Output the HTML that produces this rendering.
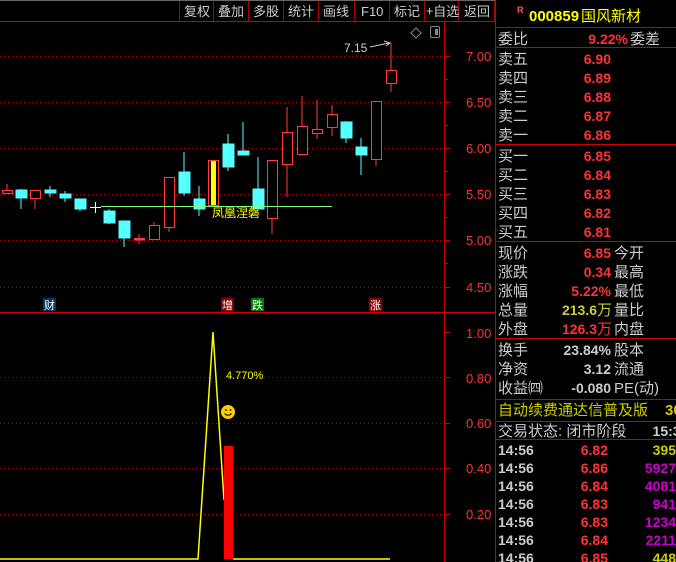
<!DOCTYPE html>
<html><head><meta charset="utf-8"><style>
html,body{margin:0;padding:0;background:#000;width:676px;height:562px;overflow:hidden}
svg{display:block}
text{font-family:"Liberation Sans","Noto Sans CJK SC",sans-serif}
.cj{font-family:"Noto Sans CJK SC","WenQuanYi Zen Hei",sans-serif}
</style></head><body>
<svg width="676" height="562" viewBox="0 0 676 562" xmlns="http://www.w3.org/2000/svg">
<rect width="676" height="562" fill="#000"/>
<line x1="0" y1="0.5" x2="495" y2="0.5" stroke="#666"/>
<!-- toolbar -->
<g stroke="#a00" stroke-width="1">
<line x1="0" y1="21.5" x2="495" y2="21.5" stroke="#c00"/>
<line x1="179.5" y1="1" x2="179.5" y2="21"/><line x1="213.5" y1="1" x2="213.5" y2="21"/><line x1="248.5" y1="1" x2="248.5" y2="21"/><line x1="283.5" y1="1" x2="283.5" y2="21"/><line x1="318.5" y1="1" x2="318.5" y2="21"/><line x1="354.5" y1="1" x2="354.5" y2="21"/><line x1="389.5" y1="1" x2="389.5" y2="21"/><line x1="424.5" y1="1" x2="424.5" y2="21"/><line x1="458.5" y1="1" x2="458.5" y2="21"/><line x1="494.5" y1="1" x2="494.5" y2="21"/>
</g>
<g fill="#ccc" font-size="13" class="cj">
<text x="184" y="16" class="cj">复权</text><text x="218" y="16" class="cj">叠加</text><text x="253" y="16" class="cj">多股</text><text x="288" y="16" class="cj">统计</text><text x="323" y="16" class="cj">画线</text><text x="361" y="16" style="font-family:'Liberation Sans'">F10</text><text x="394" y="16" class="cj">标记</text><text x="426" y="16" class="cj">+自选</text><text x="464" y="16" class="cj">返回</text>
</g>
<!-- grid -->
<g stroke="#b00" stroke-dasharray="1 3">
<line x1="0" y1="56.5" x2="443" y2="56.5"/><line x1="0" y1="102.5" x2="443" y2="102.5"/><line x1="0" y1="148.5" x2="443" y2="148.5"/><line x1="0" y1="194.5" x2="443" y2="194.5"/><line x1="0" y1="240.5" x2="443" y2="240.5"/><line x1="0" y1="287.5" x2="443" y2="287.5"/>
<line x1="0" y1="377.5" x2="443" y2="377.5"/><line x1="0" y1="423.5" x2="443" y2="423.5"/><line x1="0" y1="468.5" x2="443" y2="468.5"/><line x1="0" y1="514.5" x2="443" y2="514.5"/>
</g>
<!-- axis -->
<line x1="444.5" y1="22" x2="444.5" y2="562" stroke="#c00"/>
<line x1="0" y1="312.5" x2="495" y2="312.5" stroke="#c00" stroke-width="1.5"/>
<g stroke="#c00"><line x1="444" y1="56.5" x2="450" y2="56.5"/><line x1="444" y1="79.5" x2="448" y2="79.5"/><line x1="444" y1="102.5" x2="450" y2="102.5"/><line x1="444" y1="125.5" x2="448" y2="125.5"/><line x1="444" y1="148.5" x2="450" y2="148.5"/><line x1="444" y1="171.5" x2="448" y2="171.5"/><line x1="444" y1="194.5" x2="450" y2="194.5"/><line x1="444" y1="217.5" x2="448" y2="217.5"/><line x1="444" y1="240.5" x2="450" y2="240.5"/><line x1="444" y1="263.5" x2="448" y2="263.5"/><line x1="444" y1="287.5" x2="450" y2="287.5"/>
<line x1="444" y1="332.5" x2="450" y2="332.5"/><line x1="444" y1="377.5" x2="450" y2="377.5"/><line x1="444" y1="423.5" x2="450" y2="423.5"/><line x1="444" y1="468.5" x2="450" y2="468.5"/><line x1="444" y1="514.5" x2="450" y2="514.5"/></g>
<g fill="#f33" font-size="13">
<text x="466" y="61">7.00</text><text x="466" y="107">6.50</text><text x="466" y="153">6.00</text><text x="466" y="199">5.50</text><text x="466" y="245">5.00</text><text x="466" y="292">4.50</text>
<text x="466" y="338">1.00</text><text x="466" y="383">0.80</text><text x="466" y="428">0.60</text><text x="466" y="473">0.40</text><text x="466" y="519">0.20</text>
</g>
<!-- icons top right -->
<path d="M416 28 L421 33 L416 38 L411 33 Z" fill="none" stroke="#888"/>
<rect x="430.5" y="26.5" width="9" height="11" rx="1.5" fill="none" stroke="#888"/><rect x="435" y="29" width="3" height="6" fill="#888"/>
<text x="344" y="52" fill="#ccc" font-size="12">7.15</text>
<path d="M370 47 L389 43 M384 41 L390 43 L386 46" stroke="#ccc" fill="none"/>
<!-- candles -->
<g stroke="#ff3b3b" fill="#000">
<line x1="7" y1="184" x2="7" y2="194"/><rect x="2.5" y="190.5" width="10" height="3"/>
<line x1="35" y1="198" x2="35" y2="209"/><rect x="30.5" y="190.5" width="10" height="8"/>
<line x1="139" y1="234" x2="139" y2="244"/><rect x="134.5" y="238.5" width="10" height="1.5" fill="#ff3b3b"/>
<line x1="154" y1="222" x2="154" y2="240"/><rect x="149.5" y="225.5" width="10" height="14"/>
<line x1="169" y1="228" x2="169" y2="232"/><rect x="164.5" y="177.5" width="10" height="50"/>
<rect x="208.5" y="160.5" width="10" height="45"/>
<line x1="272" y1="219" x2="272" y2="234"/><rect x="267.5" y="160.5" width="10" height="58"/>
<line x1="287" y1="107" x2="287" y2="197"/><rect x="282.5" y="132.5" width="10" height="32"/>
<line x1="302" y1="96" x2="302" y2="126"/><rect x="297.5" y="126.5" width="10" height="28"/>
<line x1="317" y1="100" x2="317" y2="139"/><rect x="312.5" y="129.5" width="10" height="4"/>
<line x1="332" y1="105" x2="332" y2="136"/><rect x="327.5" y="114.5" width="10" height="13"/>
<line x1="376" y1="159" x2="376" y2="166"/><rect x="371.5" y="101.5" width="10" height="58"/>
<line x1="391" y1="43" x2="391" y2="92"/><rect x="386.5" y="70.5" width="10" height="13"/>
</g>
<rect x="211" y="161" width="5" height="44" fill="#ff0"/>
<g stroke="#5ff" fill="#5ff">
<line x1="21" y1="189" x2="21" y2="209"/><rect x="16" y="190" width="11" height="8"/>
<line x1="50" y1="186" x2="50" y2="197"/><rect x="45" y="190" width="11" height="3"/>
<line x1="65" y1="191" x2="65" y2="202"/><rect x="60" y="194" width="11" height="4"/>
<line x1="80" y1="199" x2="80" y2="211"/><rect x="75" y="199" width="11" height="10"/>
<line x1="109" y1="209" x2="109" y2="224"/><rect x="104" y="211" width="11" height="12"/>
<line x1="124" y1="221" x2="124" y2="247"/><rect x="119" y="221" width="11" height="17"/>
<line x1="184" y1="152" x2="184" y2="196"/><rect x="179" y="172" width="11" height="21"/>
<line x1="199" y1="186" x2="199" y2="216"/><rect x="194" y="199" width="11" height="10"/>
<line x1="228" y1="134" x2="228" y2="171"/><rect x="223" y="144" width="11" height="23"/>
<line x1="243" y1="122" x2="243" y2="155"/><rect x="238" y="151" width="11" height="4"/>
<line x1="258" y1="157" x2="258" y2="209"/><rect x="253" y="189" width="11" height="20"/>
<line x1="346" y1="121" x2="346" y2="143"/><rect x="341" y="122" width="11" height="16"/>
<line x1="361" y1="138" x2="361" y2="175"/><rect x="356" y="147" width="11" height="8"/>
</g>
<path d="M90 207.5 H101 M95.5 202 V213" stroke="#fff"/>
<line x1="101" y1="206.5" x2="332" y2="206.5" stroke="#7f7"/>
<text x="212" y="217" fill="#ff0" font-size="12" class="cj">凤凰涅磐</text>
<!-- markers -->
<rect x="43" y="298" width="13" height="13" fill="#036"/><text x="44" y="309" fill="#fff" font-size="11" class="cj">财</text>
<rect x="221" y="298" width="13" height="13" fill="#800"/><text x="222" y="309" fill="#fff" font-size="11" class="cj">增</text>
<rect x="251" y="298" width="13" height="13" fill="#070"/><text x="252" y="309" fill="#fff" font-size="11" class="cj">跌</text>
<rect x="369" y="298" width="13" height="13" fill="#800"/><text x="370" y="309" fill="#fff" font-size="11" class="cj">涨</text>
<!-- lower indicator -->
<polyline points="0,559 198,559 213,332 224,500" fill="none" stroke="#ff0" stroke-width="1.5"/>
<line x1="233" y1="559" x2="390" y2="559" stroke="#ff0" stroke-width="1.5"/>
<rect x="224" y="446" width="9" height="113" fill="#f00"/>
<text x="226" y="379" fill="#ff0" font-size="11">4.770%</text>
<circle cx="228" cy="412" r="7" fill="#fc0"/><circle cx="226" cy="410" r="0.9" fill="#000"/><circle cx="230.5" cy="410" r="0.9" fill="#000"/><path d="M224.5 413.5 Q228 417 231.5 413.5" stroke="#000" fill="none"/>
<!-- right panel -->
<line x1="495.5" y1="0" x2="495.5" y2="562" stroke="#c00"/>
<g stroke="#c00">
<line x1="495" y1="27.5" x2="676" y2="27.5"/><line x1="495" y1="47.5" x2="676" y2="47.5"/><line x1="495" y1="144.5" x2="676" y2="144.5"/><line x1="495" y1="241.5" x2="676" y2="241.5"/><line x1="495" y1="338.5" x2="676" y2="338.5"/><line x1="495" y1="399.5" x2="676" y2="399.5"/><line x1="495" y1="421.5" x2="676" y2="421.5"/><line x1="495" y1="439.5" x2="676" y2="439.5"/>
</g>
<text x="517" y="13" fill="#f55" font-size="9" font-weight="bold">R</text>
<text x="529" y="21" fill="#ff0" font-size="15" font-weight="bold">000859</text><text x="581" y="21" fill="#ff0" font-size="15" class="cj">国风新材</text>
<g font-size="15" class="cj" fill="#ccc">
<text x="498" y="44">委比</text><text x="630" y="44">委差</text>
<text x="498" y="64">卖五</text><text x="498" y="83">卖四</text><text x="498" y="102">卖三</text><text x="498" y="121">卖二</text><text x="498" y="140">卖一</text>
<text x="498" y="161">买一</text><text x="498" y="180">买二</text><text x="498" y="199">买三</text><text x="498" y="218">买四</text><text x="498" y="237">买五</text>
<text x="498" y="258">现价</text><text x="498" y="277">涨跌</text><text x="498" y="296">涨幅</text><text x="498" y="315">总量</text><text x="498" y="334">外盘</text>
<text x="614" y="258">今开</text><text x="614" y="277">最高</text><text x="614" y="296">最低</text><text x="614" y="315">量比</text><text x="614" y="334">内盘</text>
<text x="498" y="355">换手</text><text x="498" y="374">净资</text><text x="498" y="393">收益㈣</text>
<text x="614" y="355">股本</text><text x="614" y="374">流通</text><text x="614" y="393">PE(动)</text>
<text x="498" y="415" fill="#cc0">自动续费通达信普及版</text><text x="665" y="415" fill="#cc0" style="font-family:'Liberation Sans'" font-weight="bold">30</text>
<text x="498" y="436">交易状态: 闭市阶段</text>
</g>
<g font-size="14" font-weight="bold" fill="#f33" text-anchor="end">
<text x="628" y="44">9.22%</text>
<text x="611" y="64">6.90</text><text x="611" y="83">6.89</text><text x="611" y="102">6.88</text><text x="611" y="121">6.87</text><text x="611" y="140">6.86</text>
<text x="611" y="161">6.85</text><text x="611" y="180">6.84</text><text x="611" y="199">6.83</text><text x="611" y="218">6.82</text><text x="611" y="237">6.81</text>
<text x="611" y="258">6.85</text><text x="611" y="277">0.34</text><text x="611" y="296">5.22%</text>
<text x="597" y="315" fill="#cc3">213.6</text><text x="597" y="334">126.3</text>
<text x="611" y="355" fill="#ccc">23.84%</text><text x="611" y="374" fill="#ccc">3.12</text><text x="611" y="393" fill="#ccc">-0.080</text>
</g>
<text x="597" y="315" fill="#cc3" font-size="15" class="cj">万</text><text x="597" y="334" fill="#f33" font-size="15" class="cj">万</text>
<text x="693" y="436" fill="#ccc" font-size="14" font-weight="bold" text-anchor="end">15:33:</text>
<g font-size="14" font-weight="bold">
<g fill="#ccc"><text x="498" y="455">14:56</text><text x="498" y="473">14:56</text><text x="498" y="491">14:56</text><text x="498" y="509">14:56</text><text x="498" y="527">14:56</text><text x="498" y="545">14:56</text><text x="498" y="563">14:56</text></g>
<g fill="#f33" text-anchor="end"><text x="608" y="455">6.82</text><text x="608" y="473">6.86</text><text x="608" y="491">6.84</text><text x="608" y="509">6.83</text><text x="608" y="527">6.83</text><text x="608" y="545">6.84</text><text x="608" y="563">6.85</text></g>
<g text-anchor="end"><text x="676" y="455" fill="#cc0">395</text><text x="676" y="473" fill="#c0c">5927</text><text x="676" y="491" fill="#c0c">4081</text><text x="676" y="509" fill="#c0c">941</text><text x="676" y="527" fill="#c0c">1234</text><text x="676" y="545" fill="#c0c">2211</text><text x="676" y="563" fill="#cc0">448</text></g>
</g>
</svg>
</body></html>
